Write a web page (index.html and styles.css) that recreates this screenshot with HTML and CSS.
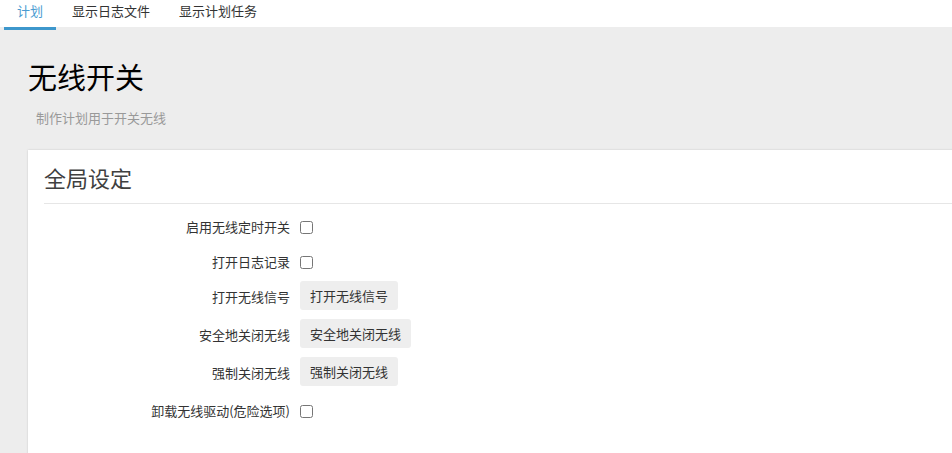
FILE: index.html
```html
<!DOCTYPE html>
<html lang="zh-CN">

<head>
    <meta charset="UTF-8">
    <meta name="viewport" content="width=device-width, initial-scale=1.0">
    <title>无线开关</title>
    <link rel="stylesheet" href="styles.css">
</head>

<body>
    <ul class="tabs">
        <li class="tab active">计划</li>
        <li class="tab">显示日志文件</li>
        <li class="tab">显示计划任务</li>
    </ul>

    <div class="main">
        <h1>无线开关</h1>
        <div class="desc">制作计划用于开关无线</div>

        <div class="card">
            <h2>全局设定</h2>
            <div class="fields">
                <div class="row">
                    <label class="label" for="enable">启用无线定时开关</label>
                    <input type="checkbox" id="enable">
                </div>
                <div class="row">
                    <label class="label" for="log">打开日志记录</label>
                    <input type="checkbox" id="log">
                </div>
                <div class="row">
                    <label class="label">打开无线信号</label>
                    <button class="btn">打开无线信号</button>
                </div>
                <div class="row">
                    <label class="label">安全地关闭无线</label>
                    <button class="btn">安全地关闭无线</button>
                </div>
                <div class="row">
                    <label class="label">强制关闭无线</label>
                    <button class="btn">强制关闭无线</button>
                </div>
                <div class="row">
                    <label class="label" for="unload">卸载无线驱动(危险选项)</label>
                    <input type="checkbox" id="unload">
                </div>
            </div>
        </div>
    </div>
</body>

</html>
```

FILE: styles.css
```css
html,
body {
    margin: 0;
    height: 100%;
    overflow: hidden;
}

body {
    font-family: "Noto Sans CJK SC", "Liberation Sans", sans-serif;
    font-size: 13px;
    color: #333;
    background: #ededed;
}

.tabs {
    display: flex;
    gap: 3px;
    height: 27px;
    margin: 0;
    padding: 0 0 0 4px;
    list-style: none;
    background: #fff;
}

.tab {
    height: 27px;
    padding: 0 13px;
    line-height: 22px;
    color: #333;
    border-bottom: 3px solid transparent;
    cursor: pointer;
}

.tab.active {
    color: #4a9bd1;
    border-bottom-color: #3d97cc;
}

.main {
    padding: 29px 0 0 28px;
}

h1 {
    margin: 0;
    font-size: 29px;
    font-weight: normal;
    line-height: 40px;
    color: #000;
}

.desc {
    margin: 12px 0 0 8px;
    line-height: 20px;
    color: #999;
}

.card {
    margin: 22px -20px 0 0;
    padding: 12px 0 40px 16px;
    background: #fff;
    box-shadow: 0 0 2px rgba(0, 0, 0, 0.15);
}

h2 {
    margin: 0;
    padding-bottom: 11px;
    font-size: 22px;
    font-weight: normal;
    line-height: 30px;
    color: #404040;
    border-bottom: 1px solid #e6e6e6;
}

.fields {
    padding-top: 7px;
}

.row {
    display: flex;
    align-items: flex-start;
    margin-bottom: 9px;
}

.label {
    width: 246px;
    margin-right: 10px;
    padding-top: 6px;
    line-height: 20px;
    text-align: right;
    color: #333;
}

.row input[type="checkbox"] {
    width: 13px;
    height: 13px;
    margin: 10px 0 0 0;
}

.btn {
    height: 29px;
    padding: 0 10px;
    font-family: inherit;
    font-size: 13px;
    color: #333;
    background: #eee;
    border: none;
    border-radius: 3px;
    cursor: pointer;
}
```
